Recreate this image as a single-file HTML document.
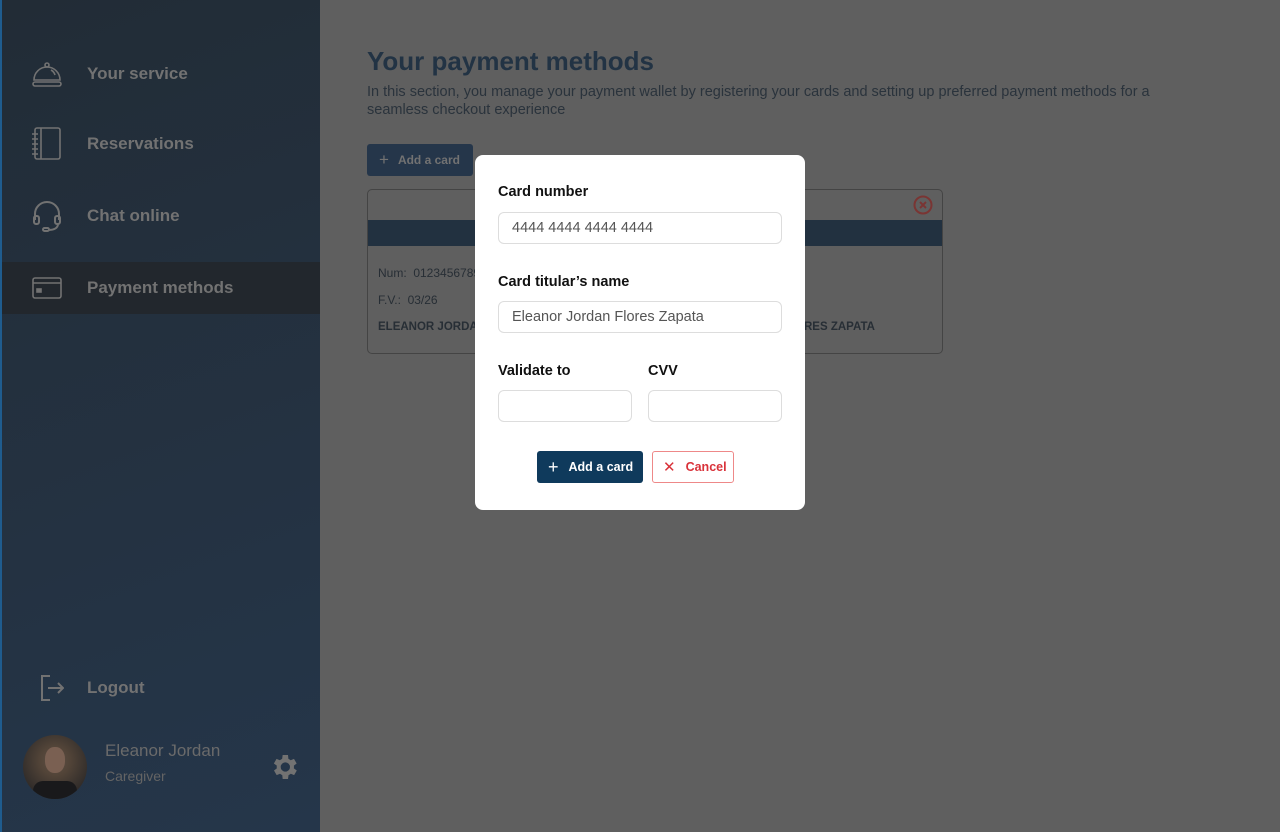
<!DOCTYPE html>
<html><head><meta charset="utf-8"><style>
*{box-sizing:border-box;margin:0;padding:0}
body{width:1280px;height:832px;overflow:hidden;font-family:"Liberation Sans",sans-serif;background:#5f5f5f;position:relative}
.side{position:absolute;left:0;top:0;width:320px;height:832px;background:linear-gradient(160deg,#222c36 0%,#25364a 100%);border-left:2px solid #1f5c8e}
.item{position:absolute;left:0;width:318px;height:52px;display:flex;align-items:center;color:#727272;font-weight:bold;font-size:17px}
.item svg{position:absolute;left:28px}
.item span{position:absolute;left:85px}
.active{background:#22272d}
.main{position:absolute;left:320px;top:0;right:0;bottom:0}
h1{position:absolute;left:47px;top:46px;font-size:26px;color:#223344;font-weight:bold}
.desc{position:absolute;left:47px;top:83px;width:820px;font-size:14.5px;line-height:18px;color:#2a333c}
.btn0{position:absolute;left:47px;top:144px;width:106px;height:32px;background:#25364a;border-radius:3px;color:#727272;font-size:12px;font-weight:bold;display:flex;align-items:center;padding-left:12px}
.card{position:absolute;left:47px;top:189px;width:576px;height:165px;border:1px solid #444;border-radius:5px}
.band{position:absolute;left:0;right:0;top:30px;height:26px;background:#223140}
.ct{position:absolute;font-size:12px;color:#272e35}
.modal{position:absolute;left:475px;top:155px;width:330px;height:355px;background:#fff;border-radius:8px}
.lab{position:absolute;left:23px;font-weight:bold;font-size:14.5px;color:#111}
.inp{position:absolute;height:32px;border:1px solid #ddd;border-radius:6px;font-size:14.5px;color:#555;padding-left:13px;display:flex;align-items:center}
</style></head><body>
<div class="side">
 <div class="item" style="top:48px"><svg width="34" height="34" viewBox="0 0 34 34" fill="none" stroke="#727272" stroke-width="1.6"><path d="M4 23a13 13 0 0 1 26 0z"/><rect x="3" y="25" width="28" height="4" rx="2"/><circle cx="17" cy="8" r="2"/><path d="M21 13a8 8 0 0 1 4 5"/></svg><span>Your service</span></div>
 <div class="item" style="top:118px"><svg width="34" height="36" viewBox="0 0 34 36" fill="none" stroke="#727272" stroke-width="1.6"><rect x="5" y="2" width="25" height="31" rx="2"/><path d="M11 2v31M2 8h6M2 13h6M2 18h6M2 23h6M2 28h6"/></svg><span>Reservations</span></div>
 <div class="item" style="top:190px"><svg width="34" height="36" viewBox="0 0 34 36" fill="none" stroke="#727272" stroke-width="2"><path d="M5 22v-6a12 12 0 0 1 24 0v6"/><rect x="4" y="18" width="5" height="8" rx="2"/><rect x="25" y="18" width="5" height="8" rx="2"/><path d="M28 26c0 4-4 6-10 6"/><rect x="13" y="30" width="6" height="3" rx="1.5"/></svg><span>Chat online</span></div>
 <div class="item active" style="top:262px"><svg width="34" height="34" viewBox="0 0 34 34" fill="none" stroke="#727272" stroke-width="1.6"><rect x="3" y="7" width="28" height="20" rx="2"/><path d="M3 12h28"/><rect x="7" y="18" width="4" height="3" fill="#727272"/></svg><span>Payment methods</span></div>
 <div class="item" style="top:662px"><svg width="34" height="34" viewBox="0 0 34 34" fill="none" stroke="#727272" stroke-width="2"><path d="M20 5H12v24h8"/><path d="M18 17h15M28 12l5 5-5 5"/></svg><span>Logout</span></div>
 <div style="position:absolute;left:21px;top:735px;width:64px;height:64px;border-radius:50%;background:radial-gradient(circle at 50% 40%,#5f5045 0,#524438 30%,#3a332e 60%,#1c1c1e 100%);overflow:hidden"><div style="position:absolute;left:22px;top:12px;width:20px;height:26px;border-radius:45%;background:#7a6052"></div><div style="position:absolute;left:10px;top:46px;width:44px;height:22px;background:#19191b;border-radius:10px 10px 0 0"></div></div>
 <div style="position:absolute;left:103px;top:741px;font-size:17px;color:#6a6a6a">Eleanor Jordan</div>
 <div style="position:absolute;left:103px;top:768px;font-size:14px;color:#646464">Caregiver</div>
 <svg style="position:absolute;left:266px;top:751px" width="32" height="32" viewBox="0 0 24 24"><path fill="#727272" d="M19.4 13a7.5 7.5 0 0 0 0-2l2.1-1.6-2-3.5-2.5 1a7 7 0 0 0-1.7-1L15 3h-4l-.4 2.9a7 7 0 0 0-1.7 1l-2.5-1-2 3.5L6.6 11a7.5 7.5 0 0 0 0 2l-2.1 1.6 2 3.5 2.5-1a7 7 0 0 0 1.7 1L11 21h4l.4-2.9a7 7 0 0 0 1.7-1l2.5 1 2-3.5zM13 15.5a3.5 3.5 0 1 1 0-7 3.5 3.5 0 0 1 0 7z"/></svg>
</div>
<div class="main">
 <h1>Your payment methods</h1>
 <div class="desc">In this section, you manage your payment wallet by registering your cards and setting up preferred payment methods for a seamless checkout experience</div>
 <div class="btn0"><span style="font-size:17px;font-weight:normal;margin-right:9px">+</span>Add a card</div>
 <div class="card"><div class="band"></div>
  <svg style="position:absolute;left:545px;top:5px" width="20" height="20" viewBox="0 0 20 20" fill="none" stroke="#7a3533" stroke-width="2"><circle cx="10" cy="10" r="8.5"/><path d="M7 7l6 6M13 7l-6 6"/></svg>
  <div class="ct" style="left:10px;top:76px">Num:&nbsp; 0123456789</div>
  <div class="ct" style="left:10px;top:103px">F.V.:&nbsp; 03/26</div>
  <div class="ct" style="left:10px;top:131px;font-weight:bold;font-size:11.5px">ELEANOR JORDAN FLORES ZAPATA</div>
  <div class="ct" style="left:436px;top:131px;font-weight:bold;font-size:11.5px">RES ZAPATA</div>
 </div>
</div>
<div class="modal">
 <div class="lab" style="top:29px">Card number</div>
 <div class="inp" style="left:23px;top:57px;width:284px">4444 4444 4444 4444</div>
 <div class="lab" style="top:119px">Card titular’s name</div>
 <div class="inp" style="left:23px;top:146px;width:284px">Eleanor Jordan Flores Zapata</div>
 <div class="lab" style="top:208px">Validate to</div>
 <div class="lab" style="top:208px;left:173px">CVV</div>
 <div class="inp" style="left:23px;top:235px;width:134px"></div>
 <div class="inp" style="left:173px;top:235px;width:134px"></div>
 <div style="position:absolute;left:62px;top:296px;width:106px;height:32px;background:#0f3a5c;border-radius:3px;color:#fff;font-size:12.5px;font-weight:bold;display:flex;align-items:center;padding-left:11px"><span style="font-size:18px;font-weight:normal;margin-right:10px">+</span>Add a card</div>
 <div style="position:absolute;left:177px;top:296px;width:82px;height:32px;border:1px solid #e88;border-radius:3px;color:#d9323a;font-size:12.5px;font-weight:bold;display:flex;align-items:center;padding-left:10px"><span style="font-size:15px;font-weight:normal;margin-right:10px">✕</span>Cancel</div>
</div>
</body></html>
